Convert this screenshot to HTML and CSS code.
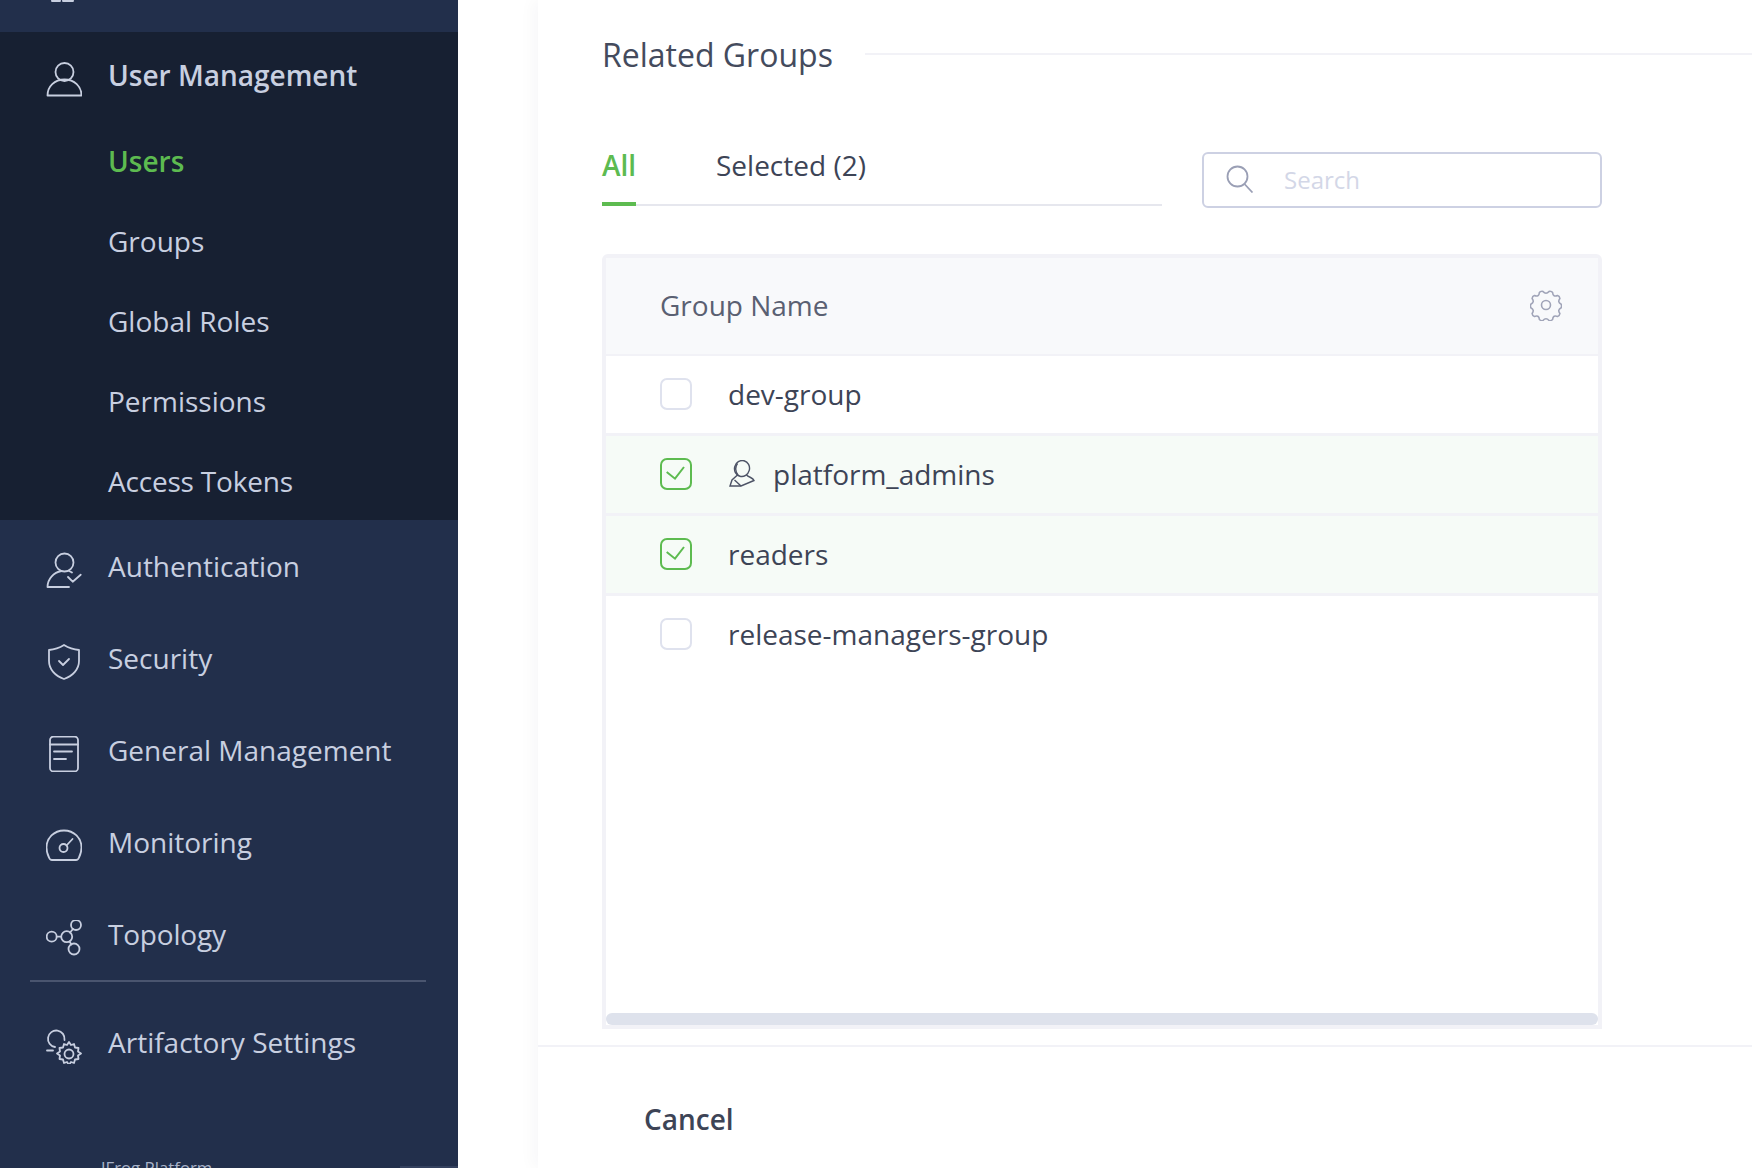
FILE: index.html
```html
<!DOCTYPE html>
<html lang="en">
<head>
    <meta charset="UTF-8">
    <title>User Management - Users</title>
    <link rel="stylesheet" href="styles.css">
</head>
<body>

    <!-- Sidebar -->
    <aside class="sidebar">
        <div class="nav-cut">
            <svg class="nav-icon" viewBox="0 0 36 36"><path d="M6 -14h8v15H6zM17 -3h10v4H17z"/></svg>
        </div>

        <div class="nav-open">
            <a class="nav-item nav-item-head">
                <svg class="nav-icon" viewBox="0 0 36 36"><circle cx="18.500" cy="11" r="9"/><path d="M1.500 34.500c0-9 7-16 17-16s17 7 17 16z"/></svg>
                User Management
            </a>
            <a class="nav-sub nav-sub-active">Users</a>
            <a class="nav-sub">Groups</a>
            <a class="nav-sub">Global Roles</a>
            <a class="nav-sub">Permissions</a>
            <a class="nav-sub nav-tight">Access Tokens</a>
        </div>

        <a class="nav-item">
            <svg class="nav-icon" viewBox="0 0 36 36"><circle cx="18.500" cy="10.500" r="9"/><path d="M1.500 35c0-8 6-14.500 14-16M1.500 35H23M22 25l4.700 4.700 8-7"/><path d="M23 19c1 .4 2 .9 3 1.600"/></svg>
            Authentication
        </a>
        <a class="nav-item">
            <svg class="nav-icon" viewBox="0 0 36 36"><path d="M18 1c4 2.500 9 4.500 15 5v11c0 8-6 15-15 18C9 32 3 25 3 17V6c6-.5 11-2.500 15-5z"/><path d="M13 17l4 4 6-6"/></svg>
            Security
        </a>
        <a class="nav-item">
            <svg class="nav-icon" viewBox="0 0 36 36"><rect x="4" y="0.500" width="28" height="35" rx="3.500"/><path d="M4 8.500h28M8 15.500h18M8 23h12"/></svg>
            General Management
        </a>
        <a class="nav-item">
            <svg class="nav-icon" viewBox="0 0 36 36"><path d="M6 32h24c1.500 0 2.500-1 3-2.500 1.500-3 2.500-6.500 2.500-10C35.500 10 28 2.500 18 2.500S.5 10 .5 19.500c0 3.500 1 7 2.500 10 .5 1.500 1.500 2.500 3 2.500z"/><circle cx="17.500" cy="20" r="4"/><path d="M20.500 17.500l6-6.500"/></svg>
            Monitoring
        </a>
        <a class="nav-item nav-tight">
            <svg class="nav-icon" viewBox="0 0 36 36"><circle cx="5.700" cy="16.700" r="5"/><circle cx="20.700" cy="16.700" r="5.500"/><circle cx="30" cy="5" r="5"/><circle cx="28" cy="29" r="5.500"/><path d="M10.700 16.700h4.500M24 12.500l3-3.500M23.500 21.500l2 3"/></svg>
            Topology
        </a>
        <div class="nav-divider"></div>
        <a class="nav-item">
            <svg class="nav-icon" viewBox="0 0 36 36"><path d="M18.500 12A8.300 8.300 0 1 0 9 19M1 22.500h6"/><g transform="translate(-1 2)"><circle cx="24" cy="24" r="4.500"/><path d="M24 12l2 3 3-1 1 3.500 3.500.5-.5 3.500 3 2-3 2 .5 3.500-3.500.5-1 3.500-3-1-2 3-2-3-3 1-1-3.500-3.500-.5.500-3.500-3-2 3-2-.5-3.500 3.500-.5 1-3.500 3 1z"/></g></svg>
            Artifactory Settings
        </a>
        <div class="version">JFrog Platform</div>
        <div class="sidebar-corner"></div>
    </aside>

    <!-- Panel -->
    <main class="panel">
        <div class="panel-body">
            <div class="section-head">
                <h2>Related Groups</h2>
                <span class="section-line"></span>
            </div>

            <div class="toolbar">
                <div class="tabs">
                    <a class="tab tab-active">All</a>
                    <a class="tab">Selected (2)</a>
                </div>
                <div class="search">
                    <svg class="search-icon" viewBox="0 0 28 28"><circle cx="11.500" cy="11.500" r="10"/><path d="M18.500 19l8 8.500"/></svg>
                    <span>Search</span>
                </div>
            </div>

            <div class="table">
                <div class="table-head">
                    <span>Group Name</span>
                    <svg class="gear" viewBox="0 0 32 32"><circle cx="16" cy="16" r="4.500"/><path d="M13 2.500c1 1.200 2 1.700 3 1.700s2-.5 3-1.700c1-.4 3 .3 3.600 1 .1 1.700.6 2.700 1.500 3.200s2 .5 3.500-.2c1 .3 2.200 2 2.300 3-.9 1.200-1.300 2.200-1.100 3.200.2 1 1 1.800 2.400 2.600.4 1 .4 2.400 0 3.400-1.400.8-2.200 1.600-2.400 2.600s.2 2 1.100 3.200c-.1 1-1.300 2.700-2.300 3-1.500-.7-2.600-.7-3.500-.2s-1.400 1.500-1.500 3.200c-.6.700-2.600 1.400-3.600 1-1-1.200-2-1.700-3-1.700s-2 .5-3 1.700c-1 .4-3-.3-3.600-1-.1-1.700-.6-2.700-1.500-3.200s-2-.5-3.500.2c-1-.3-2.200-2-2.300-3 .9-1.200 1.300-2.200 1.100-3.200-.2-1-1-1.800-2.400-2.600-.4-1-.4-2.400 0-3.400 1.400-.8 2.200-1.600 2.400-2.600s-.2-2-1.100-3.200c.1-1 1.300-2.700 2.300-3 1.500.7 2.600.7 3.500.2s1.400-1.500 1.500-3.200c.6-.7 2.600-1.400 3.600-1z"/></svg>
                </div>
                <div class="table-rows">
                    <div class="row">
                        <span class="check"></span>
                        dev-group
                    </div>
                    <div class="row row-selected">
                        <span class="check check-on"><svg viewBox="0 0 28 28"><path d="M4.700 12l8.300 6.700L22 7"/></svg></span>
                        <svg class="admin-icon" viewBox="0 0 26 27"><ellipse cx="13" cy="8.500" rx="7.500" ry="8" transform="rotate(15 13 8.500)"/><path d="M8.500 3.500c-2.500 3-2.500 8 .5 11.500"/><path d="M8.500 15L3 20l-2 6h11l13-5.500c-1-3-5-3-7.500-5.500"/><path d="M5.500 20l6.500 6"/></svg>
                        platform_admins
                    </div>
                    <div class="row row-selected">
                        <span class="check check-on"><svg viewBox="0 0 28 28"><path d="M4.700 12l8.300 6.700L22 7"/></svg></span>
                        readers
                    </div>
                    <div class="row row-last">
                        <span class="check"></span>
                        release-managers-group
                    </div>
                </div>
                <div class="scrollbar"></div>
            </div>
        </div>

        <div class="panel-footer">
            <a class="cancel">Cancel</a>
        </div>
    </main>

</body>
</html>
```

FILE: styles.css
```css
/* Global Styles */
* {
    margin: 0;
    padding: 0;
    box-sizing: border-box;
}
html, body {
    height: 1168px;
    overflow: hidden;
}
body {
    font-family: 'Open Sans', sans-serif;
    background: #fff;
    color: #3d4456;
    display: flex;
    font-kerning: normal;
    text-rendering: optimizeLegibility;
}

/* Sidebar */
.sidebar {
    width: 458px;
    height: 1168px;
    flex-shrink: 0;
    background: #222f4b;
    color: #c8cfe0;
    position: relative;
    overflow: hidden;
}
.nav-cut {
    height: 32px;
    padding-left: 46px;
    overflow: hidden;
}
.nav-icon {
    width: 36px;
    height: 36px;
    margin-top: 7px;
    margin-right: 26px;
    flex-shrink: 0;
    fill: none;
    stroke: currentColor;
    stroke-width: 1.800;
    stroke-linecap: round;
    stroke-linejoin: round;
}
.nav-cut .nav-icon {
    display: block;
    margin-top: 0;
}
.nav-open {
    background: #172032;
    height: 488px;
}
.nav-item {
    display: flex;
    align-items: center;
    height: 92px;
    padding-left: 46px;
    font-size: 28px;
}
.nav-item-head {
    height: 86px;
    margin-bottom: 3px;
    font-weight: 600;
}
.nav-sub {
    display: flex;
    align-items: center;
    height: 80px;
    padding-left: 108px;
    font-size: 28px;
}
.nav-sub-active {
    color: #5dbb50;
    font-weight: 600;
}
.nav-tight {
    letter-spacing: -0.2px;
}
.nav-divider {
    height: 2px;
    margin: 0 32px 14px 30px;
    background: #4a556f;
}
.version {
    position: absolute;
    left: 101px;
    top: 1156px;
    font-size: 16.800px;
    color: #a9b3c9;
}
.sidebar-corner {
    position: absolute;
    right: 0;
    bottom: 0;
    width: 58px;
    height: 2px;
    background: #34415e;
}

/* Panel */
.panel {
    margin-left: 80px;
    flex: 1;
    height: 1168px;
    background: #fff;
    box-shadow: -6px 0 14px rgba(30, 40, 70, 0.03);
    display: flex;
    flex-direction: column;
}
.panel-body {
    padding-left: 64px;
    height: 1045px;
}
.section-head {
    display: flex;
    align-items: center;
    height: 108px;
}
.section-head h2 {
    font-size: 32px;
    font-weight: 400;
    color: #444b5d;
}
.section-line {
    flex: 1;
    height: 2px;
    margin-left: 32px;
    background: #f2f2f7;
}

/* Tabs + search */
.toolbar {
    display: flex;
    align-items: flex-end;
    height: 100px;
}
.tabs {
    display: flex;
    width: 560px;
    height: 60px;
    margin-bottom: 2px;
    gap: 80px;
    border-bottom: 2px solid #e6e7ee;
    font-size: 28px;
}
.tab {
    height: 60px;
}
.tab-active {
    color: #5dbb50;
    border-bottom: 4px solid #5dbb50;
    width: 34px;
    font-weight: 600;
}
.search {
    display: flex;
    align-items: center;
    width: 400px;
    height: 56px;
    margin-left: 40px;
    padding-left: 22px;
    padding-bottom: 2px;
    border: 2px solid #cdd1e3;
    border-radius: 6px;
    font-size: 24px;
    color: #d3d7e7;
}
.search-icon {
    width: 28px;
    height: 28px;
    margin-right: 30px;
    fill: none;
    stroke: #9a9fb5;
    stroke-width: 1.800;
}

/* Table */
.table {
    width: 1000px;
    height: 775px;
    margin-top: 46px;
    border: 4px solid #f2f2f7;
    border-radius: 6px 6px 0 0;
    display: flex;
    flex-direction: column;
}
.table-head {
    display: flex;
    align-items: center;
    justify-content: space-between;
    height: 98px;
    padding: 0 36px 2px 54px;
    background: #f8f9fb;
    border-bottom: 2px solid #f2f2f7;
    font-size: 28px;
    color: #5a6072;
    flex-shrink: 0;
}
.gear {
    width: 32px;
    height: 32px;
    fill: none;
    stroke: #a0a4b8;
    stroke-width: 1.600;
}
.table-rows {
    flex: 1;
}
.row {
    display: flex;
    align-items: center;
    height: 80px;
    padding-left: 54px;
    padding-bottom: 2px;
    border-bottom: 3px solid #f2f2f7;
    font-size: 28px;
    color: #3d4456;
}
.row-last {
    border-bottom-color: transparent;
}
.row-selected {
    background: #f6fbf7;
}
.check {
    width: 32px;
    height: 32px;
    margin-right: 36px;
    border: 2px solid #dfe2ee;
    border-radius: 7px;
    background: #fff;
    flex-shrink: 0;
}
.check-on {
    border-color: #5dbb50;
    background: transparent;
}
.check svg {
    display: block;
    width: 28px;
    height: 28px;
    fill: none;
    stroke: #5dbb50;
    stroke-width: 2;
}
.admin-icon {
    width: 26px;
    height: 27px;
    margin-right: 18px;
    margin-left: 1px;
    flex-shrink: 0;
    fill: none;
    stroke: #4d5366;
    stroke-width: 1.400;
}
.scrollbar {
    height: 12px;
    flex-shrink: 0;
    background: #dee2ec;
    border-radius: 6px;
}

/* Footer */
.panel-footer {
    flex: 1;
    display: flex;
    align-items: center;
    padding-left: 106px;
    padding-top: 23px;
    border-top: 2px solid #f2f2f7;
}
.cancel {
    font-size: 28px;
    font-weight: 600;
    color: #3d4456;
}
```
